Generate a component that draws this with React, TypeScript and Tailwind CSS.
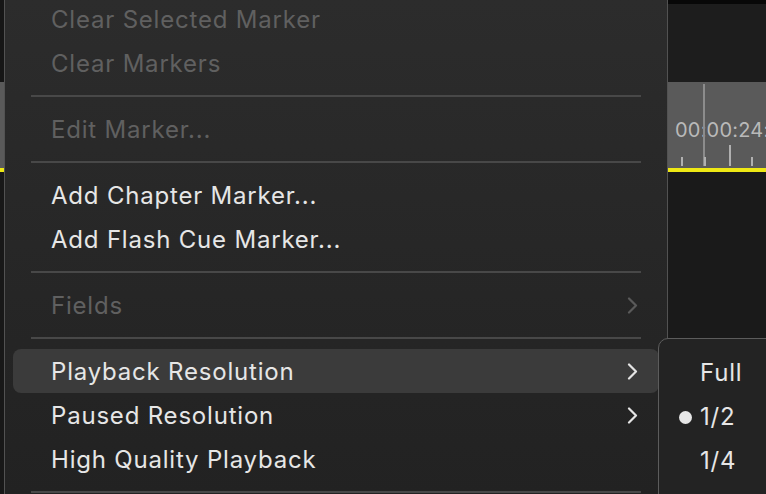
import React from "react";

type MenuEntry =
  | { kind: "item"; label: string; disabled?: boolean; submenu?: boolean; active?: boolean }
  | { kind: "sep" };

const MENU: MenuEntry[] = [
  { kind: "item", label: "Clear Selected Marker", disabled: true },
  { kind: "item", label: "Clear Markers", disabled: true },
  { kind: "sep" },
  { kind: "item", label: "Edit Marker...", disabled: true },
  { kind: "sep" },
  { kind: "item", label: "Add Chapter Marker..." },
  { kind: "item", label: "Add Flash Cue Marker..." },
  { kind: "sep" },
  { kind: "item", label: "Fields", disabled: true, submenu: true },
  { kind: "sep" },
  { kind: "item", label: "Playback Resolution", submenu: true, active: true },
  { kind: "item", label: "Paused Resolution", submenu: true },
  { kind: "item", label: "High Quality Playback" },
  { kind: "sep" },
];

const RESOLUTIONS = [
  { label: "Full", checked: false },
  { label: "1/2", checked: true },
  { label: "1/4", checked: false },
  { label: "1/8", checked: false },
];

function Chevron({ dim }: { dim?: boolean }) {
  return (
    <svg width="11" height="17" viewBox="0 0 11 17" fill="none" className={dim ? "text-[#5a5a5a]" : "text-[#e4e4e4]"}>
      <polyline points="2,1.5 9,8.5 2,15.5" stroke="currentColor" strokeWidth="2.2" strokeLinecap="round" strokeLinejoin="round" />
    </svg>
  );
}

function Ruler() {
  return (
    <div className="relative h-[86px] overflow-hidden bg-[#5a5a5a]">
      <span className="absolute left-[7px] top-[36px] text-[20px] leading-[24px] tracking-[0.2px] whitespace-nowrap text-[#b9b9b9]">
        00:00:24:20
      </span>
      <div className="absolute left-[35px] top-[2px] h-[82px] w-[2px] bg-[#8c8c8c]" />
      <div className="absolute left-[13px] bottom-[2px] h-[9px] w-[2px] bg-[#b0b0b0]" />
      <div className="absolute left-[36px] bottom-[2px] h-[9px] w-[2px] bg-[#b0b0b0]" />
      <div className="absolute left-[61px] bottom-[2px] h-[21px] w-[2px] bg-[#b0b0b0]" />
      <div className="absolute left-[83px] bottom-[2px] h-[9px] w-[2px] bg-[#b0b0b0]" />
    </div>
  );
}

export default function App() {
  return (
    <div
      className="relative flex h-[494px] w-[766px] overflow-hidden bg-[#1b1b1b]"
      style={{ fontFamily: "Inter, 'Liberation Sans', sans-serif" }}
    >
      {/* left timeline sliver */}
      <div className="flex w-[4px] flex-col">
        <div className="h-[82px] bg-[#161616]" />
        <div className="h-[86px] bg-[#5a5a5a]" />
        <div className="h-[4px] bg-[#eee814]" />
        <div className="flex-1 bg-[#181818]" />
      </div>

      {/* main context menu */}
      <div className="w-[664px] border-x-[1.5px] border-[#525252] bg-gradient-to-b from-[#2c2c2c] to-[#222222]">
        <div className="mt-[-3px] flex flex-col px-[8px]">
          {MENU.map((entry, i) =>
            entry.kind === "sep" ? (
              <div key={i} className="flex h-[22px] items-center px-[18px]">
                <div className="h-[2px] w-full bg-[#484848]" />
              </div>
            ) : (
              <div
                key={i}
                className={`flex h-[44px] items-center justify-between rounded-[8px] pl-[38px] pr-[21px] text-[24px] tracking-[0.8px] ${
                  entry.active ? "bg-[#3b3b3b]" : ""
                } ${entry.disabled ? "text-[#606060]" : "text-[#e6e6e6]"}`}
              >
                <span className="pt-[2px]">{entry.label}</span>
                {entry.submenu ? <Chevron dim={entry.disabled} /> : null}
              </div>
            )
          )}
        </div>
      </div>

      {/* right timeline area */}
      <div className="flex flex-1 flex-col">
        <div className="h-[4px] bg-[#080808]" />
        <div className="h-[78px] bg-[#1d1d1d]" />
        <Ruler />
        <div className="h-[4px] bg-[#eee814]" />
        <div className="flex-1 bg-[#1a1a1a]" />
      </div>

      {/* submenu */}
      <div className="absolute left-[658px] top-[338px] w-[140px] rounded-[10px] border border-[#5c5c5c] bg-[#232323] pt-[11px]">
        {RESOLUTIONS.map((r) => (
          <div key={r.label} className="relative flex h-[44px] items-center pl-[41px] text-[24px] tracking-[0.8px] text-[#e6e6e6]">
            {r.checked ? <span className="absolute left-[20px] top-[17px] h-[13px] w-[13px] rounded-full bg-[#e6e6e6]" /> : null}
            <span className="pt-[2px]">{r.label}</span>
          </div>
        ))}
      </div>
    </div>
  );
}
